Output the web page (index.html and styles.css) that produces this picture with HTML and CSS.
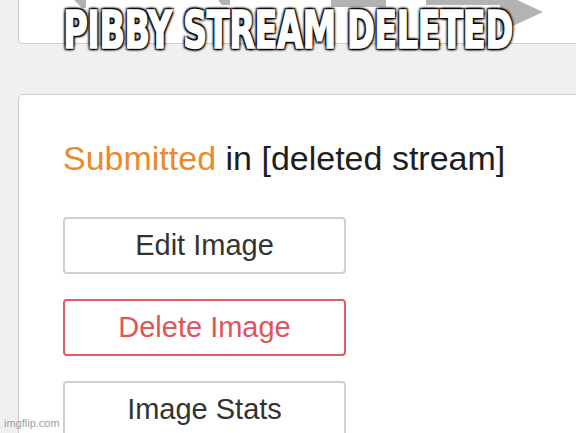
FILE: index.html
```html
<!DOCTYPE html>
<html lang="en">
<head>
<meta charset="utf-8">
<title>Pibby stream deleted</title>
<link rel="stylesheet" href="styles.css">
</head>
<body>
<div class="page">
  <div class="card card-top">
    <svg class="arrows" width="560" height="44" viewBox="0 0 560 44" aria-hidden="true">
      <polygon points="64,-10 86,-10 86,8 82,8" fill="#b3b3b3"/>
      <polygon points="210,-10 230,-10 230,5 222,5" fill="#b3b3b3"/>
      <rect x="331" y="-10" width="55" height="17" fill="#b3b3b3"/>
      <polygon points="426,-10 500,-10 500,-8 543,12 500,32 500,5 426,5" fill="#b3b3b3"/>
    </svg>
  </div>
  <div class="card card-main">
    <p class="status"><span class="status-label">Submitted</span> in [deleted stream]</p>
    <div class="actions">
      <button class="btn">Edit Image</button>
      <button class="btn btn-danger">Delete Image</button>
      <button class="btn">Image Stats</button>
    </div>
  </div>
</div>
<div class="caption">PIBBY STREAM DELETED</div>
<div class="watermark">imgflip.com</div>
</body>
</html>
```
FILE: styles.css
```css
html, body {
  margin: 0;
  padding: 0;
}
body {
  width: 576px;
  height: 433px;
  overflow: hidden;
  background: #f0f0f0;
  font-family: "Liberation Sans", Arial, sans-serif;
  position: relative;
}
.page {
  padding-left: 18px;
}
.card {
  background: #fff;
  border: 1.5px solid #cdcdcd;
  border-radius: 5px;
  margin-right: -30px;
}
.card-top {
  height: 52px;
  margin-top: -10px;
  position: relative;
  overflow: hidden;
}
.arrows {
  position: absolute;
  left: -19.5px;
  top: 8.5px;
}
.card-main {
  margin-top: 50px;
  padding: 43px 0 0 44px;
  height: 400px;
}
.status {
  margin: 0;
  font-size: 34px;
  line-height: 40px;
  color: #1e1e1e;
}
.status-label {
  color: #e98a2c;
}
.actions {
  margin-top: 39px;
  display: flex;
  flex-direction: column;
  gap: 25px;
}
.btn {
  width: 283px;
  height: 57px;
  display: flex;
  align-items: center;
  justify-content: center;
  background: #fff;
  border: 2px solid #d0d0d0;
  border-radius: 4px;
  font-family: "Liberation Sans", Arial, sans-serif;
  font-size: 29px;
  color: #333;
  padding: 0;
}
.btn-danger {
  border-color: #de5c5e;
  color: #df5558;
}
.caption {
  position: absolute;
  left: 288px;
  top: 5px;
  white-space: nowrap;
  font-family: "DejaVu Sans Condensed", "DejaVu Sans", sans-serif;
  font-weight: 700;
  font-size: 51px;
  line-height: 1;
  color: #fff;
  letter-spacing: -0.5px;
  -webkit-text-stroke: 1.5px #fff;
  text-shadow: 2px 2px 2px #000, -2px -2px 2px #000, 2px -2px 2px #000, -2px 2px 2px #000, 0 0 5px #000;
  transform: translateX(-50%) scaleX(0.73);
}
.watermark {
  position: absolute;
  left: 4px;
  bottom: 3px;
  font-size: 11px;
  line-height: 13px;
  color: #9e9e9e;
}
```
